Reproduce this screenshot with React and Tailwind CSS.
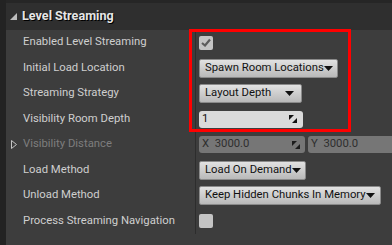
import React from 'react';

const font = { fontFamily: 'Roboto, "Noto Sans", sans-serif' };

const Arrow = () => (
    <svg width="9" height="5" viewBox="0 0 9 5" className="shrink-0">
        <polygon points="0,0 9,0 4.5,5" fill="#111" />
    </svg>
);

const Spinner = ({ color = '#111' }) => (
    <svg width="8" height="8" viewBox="0 0 8 8" className="shrink-0">
        <polygon points="0,0 5,0 0,5" fill={color} />
        <polygon points="8,3 8,8 3,8" fill={color} />
    </svg>
);

const Combo = ({ label, width }) => (
    <div className={`${width} h-[19px] flex items-center justify-between pl-[5px] pr-[7px] rounded-[2px] border border-[#8a8a8a] bg-gradient-to-b from-[#e2e2e2] to-[#b9b9b9] text-[11.3px] text-[#111]`}>
        <span className="whitespace-nowrap">{label}</span>
        <Arrow />
    </div>
);

const CheckBox = ({ checked }) => (
    <div className="w-[14px] h-[14px] rounded-[2px] bg-[#c4c4c4] flex items-center justify-center">
        {checked && (
            <svg width="10" height="9" viewBox="0 0 10 9">
                <path d="M1 5 L4 7.5 L9 1.5" stroke="#5c5c5c" strokeWidth="2.2" fill="none" />
            </svg>
        )}
    </div>
);

const rows = [
    { label: 'Enabled Level Streaming', value: <CheckBox checked /> },
    { label: 'Initial Load Location', value: <Combo label="Spawn Room Locations" width="w-[139px]" /> },
    { label: 'Streaming Strategy', value: <Combo label="Layout Depth" width="w-[103px]" /> },
    {
        label: 'Visibility Room Depth',
        value: (
            <div className="w-[104px] h-[17px] rounded-[3px] bg-[#dadada] flex items-center justify-between pl-[3px] pr-[6px] text-[11.3px] text-[#111]">
                <span>1</span>
                <Spinner />
            </div>
        ),
    },
    {
        label: 'Visibility Distance',
        disabled: true,
        expander: true,
        value: (
            <div className="flex gap-[3px] w-full">
                <div className="w-[106px] h-[17px] rounded-[3px] bg-[#767676] flex items-center justify-between pl-[3px] pr-[5px] text-[11.3px] text-[#2e2e2e]">
                    <span>X&nbsp;&nbsp;3000.0</span>
                    <Spinner color="#1c1c1c" />
                </div>
                <div className="flex-1 h-[17px] rounded-l-[3px] bg-[#767676] flex items-center pl-[3px] text-[11.3px] text-[#2e2e2e]">
                    <span>Y&nbsp;&nbsp;3000.0</span>
                </div>
            </div>
        ),
    },
    { label: 'Load Method', value: <Combo label="Load On Demand" width="w-[107px]" /> },
    { label: 'Unload Method', value: <Combo label="Keep Hidden Chunks In Memory" width="w-[182px]" /> },
    { label: 'Process Streaming Navigation', value: <CheckBox /> },
];

const App = () => {
    return (
        <div className="w-[392px] h-[245px] bg-[#232323] flex overflow-hidden relative" style={font}>
            <div className="w-[6px] shrink-0" />
            <div className="flex-1 flex flex-col">
                {/* Top strip */}
                <div className="h-[3px] bg-[#262626]" />

                {/* Header */}
                <div className="h-[27px] bg-[#2f2f2f] flex items-center pl-[4px] gap-[5px]">
                    <svg width="7" height="7" viewBox="0 0 7 7">
                        <polygon points="7,0 7,7 0,7" fill="#bdbdbd" />
                    </svg>
                    <span className="text-[12.6px] font-bold text-[#e6e6e6] [text-shadow:1px_1px_0_#000]">Level Streaming</span>
                </div>

                {/* Rows */}
                <div className="flex-1 bg-[#3d3d3d] flex flex-col">
                    {rows.map((row) => (
                        <div key={row.label} className="h-[25.5px] flex shrink-0">
                            <div className="w-[189px] shrink-0 flex items-center pl-[5px]">
                                <div className="w-[12px] flex items-center">
                                    {row.expander && (
                                        <svg width="6" height="9" viewBox="0 0 6 9">
                                            <polygon points="0.5,0.5 5.5,4.5 0.5,8.5" fill="none" stroke="#c4c4c4" strokeWidth="1" />
                                        </svg>
                                    )}
                                </div>
                                <span className={`text-[11.3px] whitespace-nowrap ${row.disabled ? 'text-[#7e7e7e]' : 'text-[#cfcfcf]'}`}>
                                    {row.label}
                                </span>
                            </div>
                            <div className="w-[1px] bg-[#2d2d2d]" />
                            <div className="flex-1 flex items-center pl-[3px]">{row.value}</div>
                        </div>
                    ))}
                </div>
            </div>

            {/* Highlight box */}
            <div className="absolute left-[189px] top-[29px] w-[162px] h-[103px] border-[3px] border-[#ff0000] pointer-events-none" />
        </div>
    );
};

export default App;
